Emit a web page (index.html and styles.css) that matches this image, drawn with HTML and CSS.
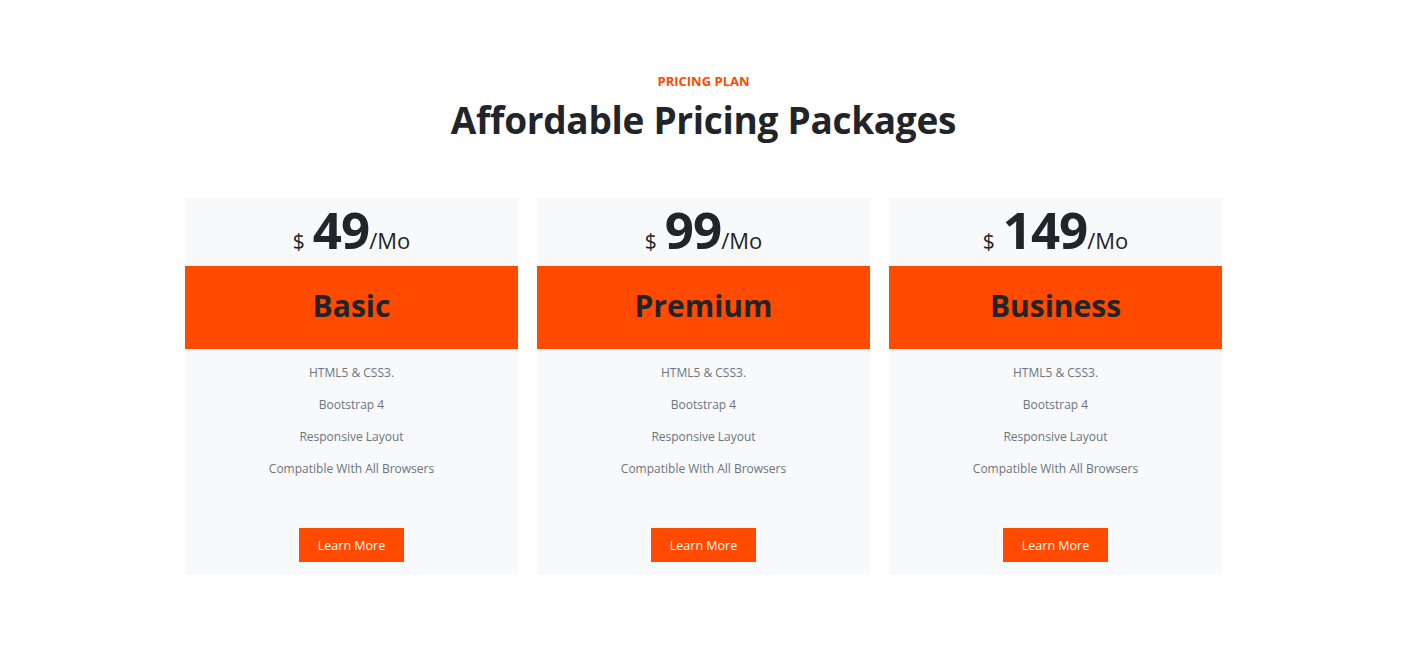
FILE: index.html
```html
<!DOCTYPE html>
<html lang="en">
<head>
<meta charset="utf-8">
<title>Pricing</title>
<link rel="stylesheet" href="styles.css">
</head>
<body>
<section class="pricing">
  <div class="heading">
    <p class="eyebrow">PRICING PLAN</p>
    <h1 class="title">Affordable Pricing Packages</h1>
  </div>
  <div class="cards">
    <div class="card">
      <div class="price"><span class="cur">$</span><span class="amt">49</span><span class="per">/Mo</span></div>
      <div class="band">Basic</div>
      <ul class="features">
        <li>HTML5 &amp; CSS3.</li>
        <li>Bootstrap 4</li>
        <li>Responsive Layout</li>
        <li>Compatible With All Browsers</li>
      </ul>
      <a class="btn" href="#">Learn More</a>
    </div>
    <div class="card">
      <div class="price"><span class="cur">$</span><span class="amt">99</span><span class="per">/Mo</span></div>
      <div class="band">Premium</div>
      <ul class="features">
        <li>HTML5 &amp; CSS3.</li>
        <li>Bootstrap 4</li>
        <li>Responsive Layout</li>
        <li>Compatible With All Browsers</li>
      </ul>
      <a class="btn" href="#">Learn More</a>
    </div>
    <div class="card">
      <div class="price"><span class="cur">$</span><span class="amt">149</span><span class="per">/Mo</span></div>
      <div class="band">Business</div>
      <ul class="features">
        <li>HTML5 &amp; CSS3.</li>
        <li>Bootstrap 4</li>
        <li>Responsive Layout</li>
        <li>Compatible With All Browsers</li>
      </ul>
      <a class="btn" href="#">Learn More</a>
    </div>
  </div>
</section>
</body>
</html>
```
FILE: styles.css
```css
* { box-sizing: border-box; }
body {
  margin: 0;
  background: #fff;
  font-family: "Open Sans", "Noto Sans", sans-serif;
  color: #212529;
}
.pricing {
  padding-top: 72px;
  display: flex;
  flex-direction: column;
  align-items: center;
  padding-right: 5px;
}
.heading { text-align: center; }
.eyebrow {
  margin: 0;
  color: #ff4a00;
  font-size: 13px;
  font-weight: 700;
  line-height: 18px;
}
.title {
  margin: 6px 0 0;
  font-size: 37px;
  font-weight: 700;
  line-height: 48px;
  letter-spacing: -0.3px;
}
.cards {
  margin-top: 54px;
  display: flex;
  gap: 19px;
}
.card {
  width: 333px;
  background: #f8f9fa;
  display: flex;
  flex-direction: column;
  align-items: center;
  padding-bottom: 13px;
}
.price {
  height: 68px;
  display: flex;
  align-items: baseline;
  justify-content: center;
  margin-top: -1px;
  padding-bottom: 1px;
}
.cur { font-size: 21px; margin-right: 8px; }
.amt { font-size: 51px; font-weight: 700; line-height: 64px; letter-spacing: -1px; }
.per { font-size: 22px; }
.band {
  align-self: stretch;
  height: 83px;
  margin-top: 1px;
  background: #ff4a00;
  display: flex;
  align-items: center;
  justify-content: center;
  padding-bottom: 4px;
  font-size: 30px;
  font-weight: 700;
  color: #212529;
}
.features {
  list-style: none;
  margin: 0;
  padding: 14px 0 0;
  text-align: center;
  font-size: 12px;
  color: #6c757d;
}
.features li { line-height: 20px; margin-bottom: 12px; }
.btn {
  margin-top: 37px;
  width: 105px;
  height: 34px;
  background: #ff4a00;
  color: #fff;
  font-size: 12.5px;
  text-decoration: none;
  display: flex;
  align-items: center;
  justify-content: center;
}
```
